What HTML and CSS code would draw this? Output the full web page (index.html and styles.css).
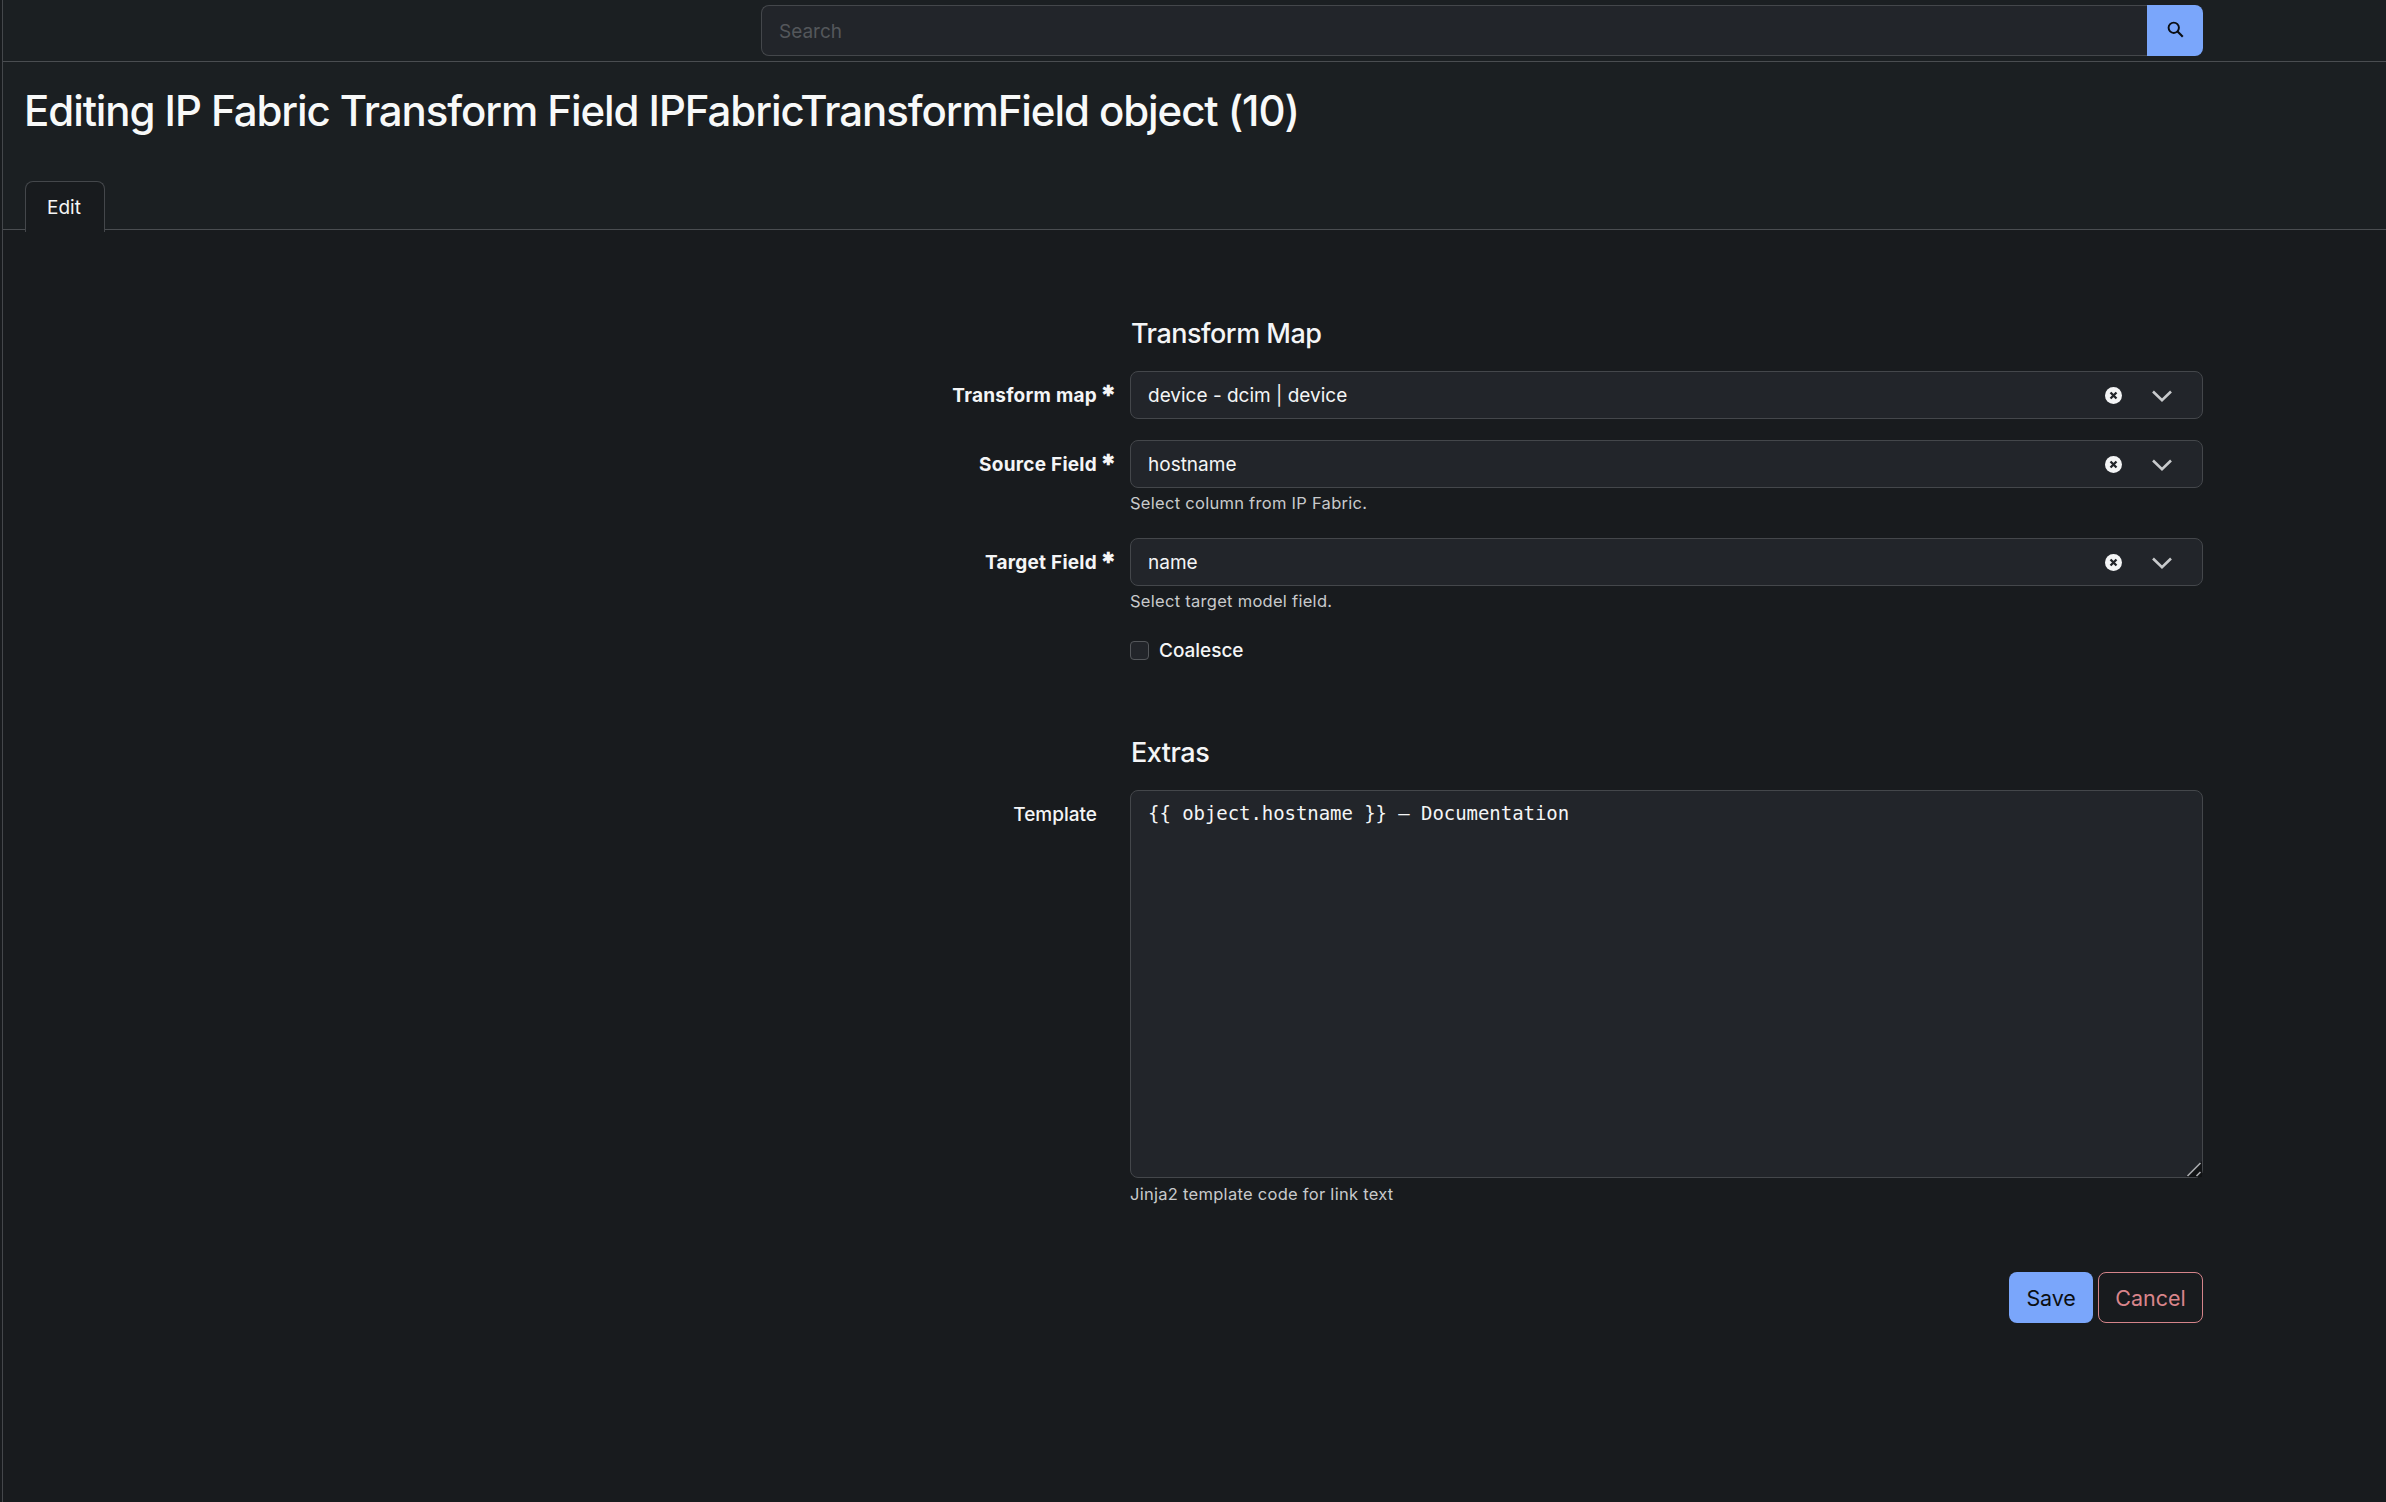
FILE: index.html
```html
<!DOCTYPE html>
<html lang="en">
<head>
<meta charset="utf-8">
<title>Editing IP Fabric Transform Field</title>
<link rel="stylesheet" href="styles.css">
</head>
<body>
<div class="page">
  <header class="topbar">
    <form class="search">
      <input class="search-input" type="text" placeholder="Search">
      <button class="search-btn" type="button" aria-label="Search">
        <svg viewBox="0 0 24 24" width="21" height="21"><circle cx="10" cy="10" r="5.9" fill="none" stroke="#0b0e12" stroke-width="2.2"/><path d="M14.4 14.4 20.3 20.3" stroke="#0b0e12" stroke-width="2.4" fill="none"/></svg>
      </button>
    </form>
  </header>
  <section class="page-head">
    <h1>Editing IP Fabric Transform Field IPFabricTransformField object (10)</h1>
    <nav class="tabs"><a class="tab">Edit</a></nav>
  </section>
  <main class="content">
    <h2 class="section-title first">Transform Map</h2>
    <div class="row row-plain">
      <label class="label req">Transform map<span class="star">✱</span></label>
      <div class="field">
        <div class="select"><span class="select-value">device - dcim | device</span>
          <svg class="clear" viewBox="0 0 16 16" width="17" height="17"><circle cx="8" cy="8" r="8" fill="#f4f5f6"/><path d="M5.2 5.2 10.8 10.8M10.8 5.2 5.2 10.8" stroke="#22252a" stroke-width="2.2"/></svg>
          <svg class="chev" viewBox="0 0 20 12" width="20" height="12"><path d="M1 1.5 10 10.2 19 1.5" fill="none" stroke="#c8cacc" stroke-width="2.6"/></svg>
        </div>
      </div>
    </div>
    <div class="row row-source">
      <label class="label req">Source Field<span class="star">✱</span></label>
      <div class="field">
        <div class="select"><span class="select-value">hostname</span>
          <svg class="clear" viewBox="0 0 16 16" width="17" height="17"><circle cx="8" cy="8" r="8" fill="#f4f5f6"/><path d="M5.2 5.2 10.8 10.8M10.8 5.2 5.2 10.8" stroke="#22252a" stroke-width="2.2"/></svg>
          <svg class="chev" viewBox="0 0 20 12" width="20" height="12"><path d="M1 1.5 10 10.2 19 1.5" fill="none" stroke="#c8cacc" stroke-width="2.6"/></svg>
        </div>
        <div class="help">Select column from IP Fabric.</div>
      </div>
    </div>
    <div class="row">
      <label class="label req">Target Field<span class="star">✱</span></label>
      <div class="field">
        <div class="select"><span class="select-value">name</span>
          <svg class="clear" viewBox="0 0 16 16" width="17" height="17"><circle cx="8" cy="8" r="8" fill="#f4f5f6"/><path d="M5.2 5.2 10.8 10.8M10.8 5.2 5.2 10.8" stroke="#22252a" stroke-width="2.2"/></svg>
          <svg class="chev" viewBox="0 0 20 12" width="20" height="12"><path d="M1 1.5 10 10.2 19 1.5" fill="none" stroke="#c8cacc" stroke-width="2.6"/></svg>
        </div>
        <div class="help">Select target model field.</div>
      </div>
    </div>
    <div class="row check-row">
      <span></span>
      <label class="check"><input type="checkbox"><span>Coalesce</span></label>
    </div>
    <h2 class="section-title second">Extras</h2>
    <div class="row">
      <label class="label plain">Template</label>
      <div class="field">
        <div class="ta-wrap">
          <textarea class="template" spellcheck="false">{{ object.hostname }} – Documentation</textarea>
          <svg class="grip" viewBox="0 0 16 16" width="16" height="16"><path d="M16 0V16H0Z" fill="#111315"/><path d="M1.5 15 14.5 2M10.5 15 14.5 11" stroke="#a9abae" stroke-width="1.6" fill="none"/></svg>
        </div>
        <div class="help help-ta">Jinja2 template code for link text</div>
      </div>
    </div>
    <div class="actions">
      <button class="btn save" type="button">Save</button>
      <button class="btn cancel" type="button">Cancel</button>
    </div>
  </main>
</div>
</body>
</html>
```
FILE: styles.css
```css
* { box-sizing: border-box; }
html, body { margin: 0; padding: 0; height: 100%; }
body {
  background: #181b1e;
  color: #f4f5f6;
  font-family: Inter, "Noto Sans", sans-serif;
  overflow: hidden;
}
.page {
  margin-left: 2px;
  border-left: 1px solid #44474b;
  min-height: 1502px;
}
.topbar {
  height: 62px;
  background: #1b1f22;
  border-bottom: 1px solid #4a4d51;
  padding: 5px 0 0 758px;
}
.search { display: flex; width: 1442px; height: 51px; }
.search-input {
  flex: 1;
  background: #22252a;
  border: 1px solid #44474b;
  border-right: 0;
  border-radius: 8px 0 0 8px;
  padding: 2px 17px 0 17px;
  font: 400 19px Inter, sans-serif;
  color: #f4f5f6;
  outline: 0;
}
.search-input::placeholder { color: #54575b; }
.search-btn {
  width: 56px;
  background: #7aa6fb;
  border: 0;
  border-radius: 0 8px 8px 0;
  display: flex;
  align-items: center;
  justify-content: center;
  padding: 0 0 3px;
}
.page-head {
  height: 168px;
  background: #1b1f22;
  border-bottom: 1px solid #4a4d51;
  padding: 22px 0 0 21px;
  display: flex;
  flex-direction: column;
  justify-content: space-between;
}
h1 {
  margin: 0;
  font-size: 42px;
  line-height: 54px;
  font-weight: 500;
  letter-spacing: -1.08px;
  color: #f8f9f9;
}
.tabs { display: flex; margin-bottom: -3px; }
.tab {
  width: 80px;
  height: 51px;
  margin-left: 1px;
  background: #181b1e;
  border: 1px solid #44474b;
  border-bottom: 0;
  border-radius: 8px 8px 0 0;
  display: flex;
  align-items: center;
  justify-content: center;
  font-size: 19px;
  padding: 1px 2px 0 0;
}
.content { width: 2200px; padding-top: 88px; }
.section-title {
  margin: 0 0 0 1128px;
  font-size: 27px;
  line-height: 32px;
  font-weight: 500;
  letter-spacing: -0.5px;
  height: 53px;
}
.section-title.second { margin-top: 71px; height: 53px; }
.row {
  display: grid;
  grid-template-columns: 1094px 1073px;
  column-gap: 33px;
  margin-bottom: 28px;
}
.row-plain { margin-bottom: 20px; }
.row-source { margin-bottom: 29px; }
.label {
  text-align: right;
  font-size: 19px;
  line-height: 49px;
  letter-spacing: 0.25px;
  position: relative;
}
.label.req { font-weight: 700; }
.label.plain { font-weight: 500; letter-spacing: 0; }
.star {
  position: absolute;
  right: -18px;
  top: -5px;
  font-size: 15px;
  font-weight: 700;
}
.select {
  height: 48px;
  background: #22252a;
  border: 1px solid #44474b;
  border-radius: 8px;
  display: flex;
  align-items: center;
  padding: 0 30px 0 17px;
}
.select-value { flex: 1; font-size: 19px; }
.clear { margin-right: 30px; }
.chev { margin-top: 2px; }
.help {
  font-size: 16.5px;
  line-height: 20px;
  letter-spacing: 0.28px;
  color: #c8cacc;
  margin-top: 5px;
  margin-bottom: -4px;
}
.check-row { margin-bottom: 0; }
.check {
  display: flex;
  align-items: center;
  gap: 10px;
  height: 31px;
  font-size: 19px;
  font-weight: 500;
  letter-spacing: -0.03px;
}
.check input {
  appearance: none;
  width: 19px;
  height: 19px;
  margin: 0;
  background: #22252a;
  border: 1px solid #54575b;
  border-radius: 4px;
}
.ta-wrap { position: relative; }
.template {
  display: block;
  width: 100%;
  height: 388px;
  background: #22252a;
  border: 1px solid #44474b;
  border-radius: 8px;
  padding: 10px 17px;
  font: 400 19px/24px "DejaVu Sans Mono", monospace;
  letter-spacing: -0.06px;
  color: #f4f5f6;
  outline: 0;
  resize: none;
}
.grip { position: absolute; right: 1px; bottom: 1px; }
.help-ta { margin-top: 6px; }
.actions {
  display: flex;
  justify-content: flex-end;
  gap: 5px;
  margin-top: 72px;
}
.btn {
  height: 51px;
  border-radius: 8px;
  font: 400 21.5px Inter, sans-serif;
  padding: 0;
}
.save { width: 84px; background: #7aa6fb; border: 0; color: #0b0e12; letter-spacing: -0.2px; }
.cancel { width: 105px; background: transparent; border: 1px solid #d4848a; color: #d9858b; }
```
